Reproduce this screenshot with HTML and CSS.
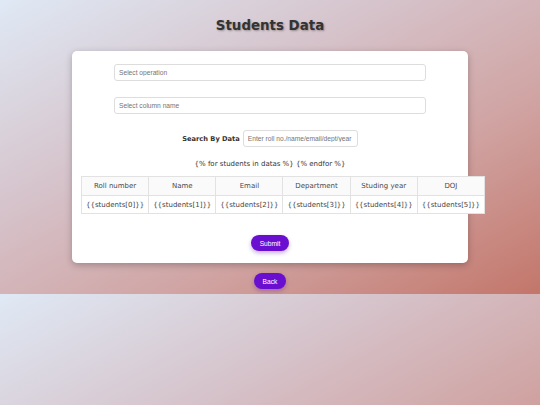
FILE: index.html
```html
<!DOCTYPE html>
<html>
<head>
<meta charset="utf-8">
<title>Students Data</title>
<link rel="stylesheet" href="styles.css">
</head>
<body>
<div class="page">
  <h1 class="title">Students Data</h1>
  <form class="card">
    <input class="field" type="text" placeholder="Select operation">
    <input class="field" type="text" placeholder="Select column name">
    <div class="search-row">
      <label class="search-label">Search By Data</label>
      <input class="search-input" type="text" placeholder="Enter roll no./name/email/dept/year">
    </div>
    <p class="template">{% for students in datas %} {% endfor %}</p>
    <table class="data">
      <thead>
        <tr>
          <th>Roll number</th>
          <th>Name</th>
          <th>Email</th>
          <th>Department</th>
          <th>Studing year</th>
          <th>DOJ</th>
        </tr>
      </thead>
      <tbody>
        <tr>
          <td>{{students[0]}}</td>
          <td>{{students[1]}}</td>
          <td>{{students[2]}}</td>
          <td>{{students[3]}}</td>
          <td>{{students[4]}}</td>
          <td>{{students[5]}}</td>
        </tr>
      </tbody>
    </table>
    <div class="actions">
      <button class="pill" type="button">Submit</button>
    </div>
  </form>
  <div class="actions back-wrap">
    <button class="pill" type="button">Back</button>
  </div>
</div>
</body>
</html>
```
FILE: styles.css
```css
html {
  margin: 0;
}
body {
  margin: 0;
  font-family: "DejaVu Sans", sans-serif;
  background: linear-gradient(to bottom right, #dfe9f5 0%, #d6c4cc 35%, #d0a4a3 66%, #c3766a 100%);
}
.page {
  padding: 16px 0 5px;
}
.title {
  margin: 0 0 15px;
  text-align: center;
  font-size: 13.4px;
  line-height: 20px;
  font-weight: bold;
  color: #333;
  text-shadow: 1px 1px 2px rgba(0, 0, 0, 0.3);
}
.card {
  width: 378px;
  margin: 0 auto;
  padding: 13px 9px 12px;
  background: #fff;
  border-radius: 5px;
  box-shadow: 0 2px 7px rgba(0, 0, 0, 0.25);
  display: flex;
  flex-direction: column;
  align-items: center;
}
.field {
  box-sizing: border-box;
  width: 312px;
  height: 17px;
  margin: 0 0 16px;
  padding: 0 4px;
  border: 1px solid #ddd;
  border-radius: 3px;
  font-family: "Liberation Sans", Arial, sans-serif;
  font-size: 6.67px;
  outline: none;
}
.field::placeholder,
.search-input::placeholder {
  color: #757575;
}
.search-row {
  display: flex;
  align-items: center;
  gap: 3px;
}
.search-label {
  font-size: 6.67px;
  font-weight: bold;
  color: #333;
}
.search-input {
  box-sizing: border-box;
  width: 115px;
  height: 17px;
  padding: 0 4px;
  border: 1px solid #ddd;
  border-radius: 3px;
  font-family: "Liberation Sans", Arial, sans-serif;
  font-size: 6.67px;
  outline: none;
}
.template {
  margin: 13px 0 0;
  font-size: 7px;
  line-height: 9px;
  color: #333;
}
.data {
  align-self: flex-start;
  width: 404px;
  margin-top: 7px;
  border-collapse: collapse;
  table-layout: fixed;
  font-size: 7px;
  color: #444;
  background: #fff;
}
.data th,
.data td {
  border: 1px solid #e2e2e2;
  padding: 0 2px;
  text-align: center;
  font-weight: normal;
  white-space: nowrap;
}
.data th {
  height: 18px;
  background: #fafafa;
  color: #4a4a4a;
}
.data td {
  height: 17px;
}
.actions {
  display: flex;
  justify-content: center;
}
.card .actions {
  margin-top: 21px;
}
.back-wrap {
  margin-top: 10px;
}
.pill {
  height: 16px;
  padding: 0 9px;
  border: none;
  border-radius: 8px;
  background: #6a0fcf;
  color: #fff;
  font-family: "Liberation Sans", Arial, sans-serif;
  font-size: 6.67px;
  box-shadow: 0 2px 4px rgba(90, 20, 160, 0.35);
}
```
